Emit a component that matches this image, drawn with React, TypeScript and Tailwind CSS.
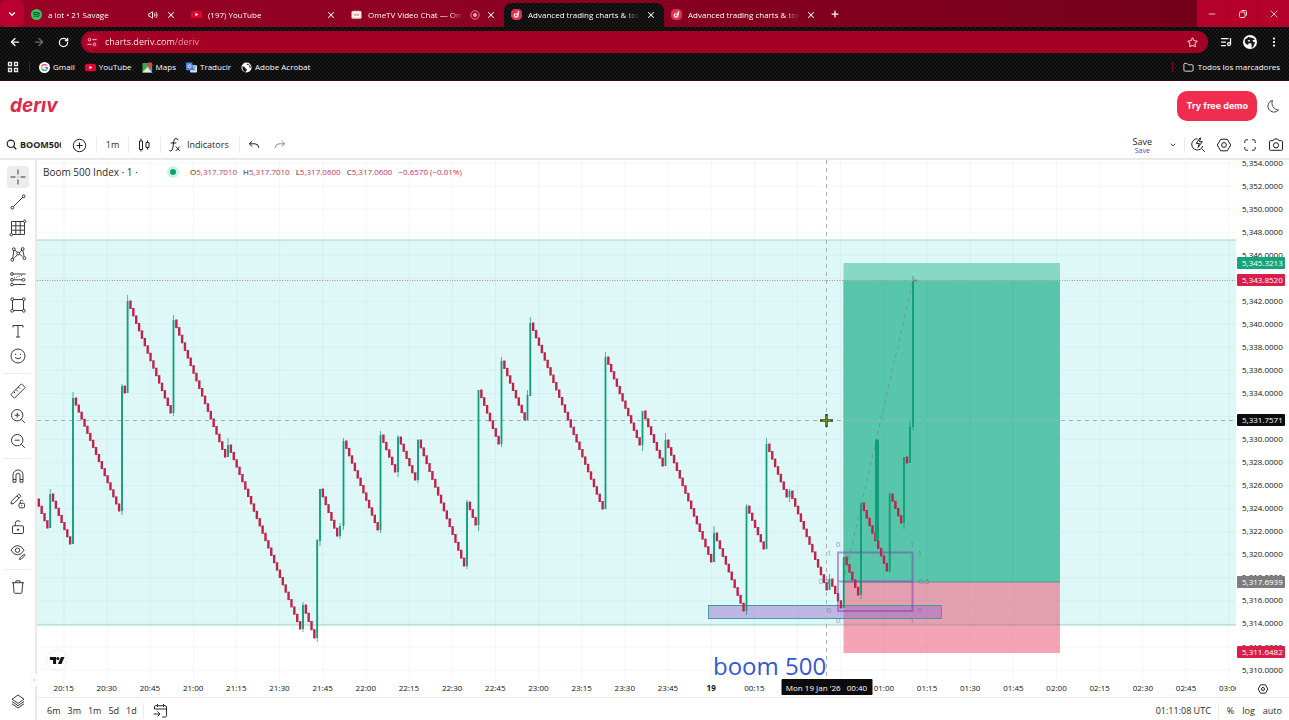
import React from "react";
import {
  ArrowLeft,
  ArrowRight,
  ChevronDown,
  EllipsisVertical,
  Folder,
  ListMusic,
  Minus,
  Plus,
  RotateCw,
  Star,
  Volume2,
  X,
} from "lucide-react";

/* ---------- shared icon frame ---------- */

function Glyph({ children, className = "size-5" }: { children: React.ReactNode; className?: string }) {
  return (
    <svg viewBox="0 0 20 20" fill="none" stroke="currentColor" strokeWidth="1" className={className} aria-hidden="true">
      {children}
    </svg>
  );
}

/* ---------- browser chrome ---------- */

function SpotifyMark() {
  return (
    <svg viewBox="0 0 12 12" className="size-[11px] shrink-0" aria-hidden="true">
      <circle cx="6" cy="6" r="6" fill="#35c565" />
      <g fill="none" stroke="#14361f" strokeLinecap="round">
        <path d="M2.6 4.3q3.6-1.1 6.9.7" strokeWidth="1.2" />
        <path d="M3 6.2q3.1-.9 5.9.6" strokeWidth="1" />
        <path d="M3.3 8q2.6-.7 4.9.5" strokeWidth=".8" />
      </g>
    </svg>
  );
}

function YouTubeMark() {
  return (
    <svg viewBox="0 0 12 12" className="size-[11px] shrink-0" aria-hidden="true">
      <rect x="0" y="1.8" width="12" height="8.4" rx="2.2" fill="#e3032f" />
      <path d="M4.8 4.2v3.6L8 6z" fill="#fff" />
    </svg>
  );
}

function OmeMark() {
  return (
    <svg viewBox="0 0 12 12" className="size-[11px] shrink-0" aria-hidden="true">
      <path d="M3.5.8l2 2M8.5.8l-2 2" stroke="#e9b9a8" strokeWidth=".8" />
      <rect x=".5" y="2.3" width="11" height="8.4" rx="1.4" fill="#f0d9c8" />
      <rect x="1.7" y="3.6" width="8.6" height="5.4" rx="1" fill="#fff" />
      <path d="M3 5l1.4 2.4L6 5l1.6 2.4L9 5" fill="none" stroke="#d8636f" strokeWidth=".9" />
    </svg>
  );
}

function DerivMark() {
  return (
    <svg viewBox="0 0 12 12" className="size-[11px] shrink-0" aria-hidden="true">
      <rect width="12" height="12" rx="4.5" fill="#e0324f" />
      <circle cx="5.3" cy="7" r="1.8" fill="none" stroke="#fff" strokeWidth="1.3" />
      <path d="M8.3 2.4L7.1 8.9" stroke="#fff" strokeWidth="1.4" />
    </svg>
  );
}

function GoogleMark() {
  return (
    <svg viewBox="0 0 12 12" className="size-[11px] shrink-0" aria-hidden="true">
      <circle cx="6" cy="6" r="6" fill="#fff" />
      <g fill="none" strokeWidth="1.5">
        <path d="M8.4 3.9A3.2 3.2 0 0 0 3.2 4.5" stroke="#ea4335" />
        <path d="M3.2 4.5a3.2 3.2 0 0 0 0 3" stroke="#fbbc05" />
        <path d="M3.2 7.5a3.2 3.2 0 0 0 4.9.9" stroke="#34a853" />
        <path d="M8.1 8.4A3 3 0 0 0 9.2 6.1H6.1" stroke="#4285f4" />
      </g>
    </svg>
  );
}

function MapsMark() {
  return (
    <svg viewBox="0 0 12 12" className="size-[11px] shrink-0" aria-hidden="true">
      <rect x=".5" y="1" width="10.5" height="10.5" rx="1" fill="#34a853" />
      <path d="M.5 11.5l6-6 5 6z" fill="#e6e9ec" />
      <path d="M6 6l5 5.5V5z" fill="#4a89f3" />
      <path d="M1 11l6-6" stroke="#fbd04b" strokeWidth="1.3" />
      <path d="M8.8.2a2.6 2.6 0 0 1 2.6 2.6c0 1.8-2.6 4.6-2.6 4.6S6.2 4.6 6.2 2.8A2.6 2.6 0 0 1 8.8.2z" fill="#e2453b" />
    </svg>
  );
}

function TranslateMark() {
  return (
    <svg viewBox="0 0 12 12" className="size-[11px] shrink-0" aria-hidden="true">
      <rect x="4.5" y="3.5" width="7.5" height="8" rx=".8" fill="#dfe3e8" />
      <path d="M0 .5h6.6L9 9H.8Q0 9 0 8.2z" fill="#4b86ee" />
      <circle cx="3.8" cy="4.6" r="1.6" fill="none" stroke="#fff" strokeWidth=".9" />
      <path d="M7.6 5.6h3.4M9.3 5.6q0 2.4-2 3.8M8.3 7l2.4 2.6" stroke="#5d7fb8" strokeWidth=".7" fill="none" />
    </svg>
  );
}

function GlobeMark() {
  return (
    <svg viewBox="0 0 12 12" className="size-[11px] shrink-0" aria-hidden="true">
      <circle cx="6" cy="6" r="5.5" fill="#fff" />
      <path d="M1.5 4.5q2.5 0 3 1.800t2 1.500q-.3 2-1.500 3Q1.500 10 1.500 4.500zM6 1.500q.2 2 2 1.800t1.200 1.800 1.500.6q-.2-3-4.700-4.200z" fill="#101010" />
    </svg>
  );
}

function Tab({
  icon,
  title,
  active,
  extra,
}: {
  icon: React.ReactNode;
  title: string;
  active?: boolean;
  extra?: React.ReactNode;
}) {
  const base = "flex h-6 w-40 shrink items-center gap-1.5 pb-px pr-2 pl-[7px] text-[8px] text-white";
  return (
    <div
      role="tab"
      aria-selected={!!active}
      className={
        active
          ? base + " rounded-t-lg bg-[#0b0b0b] bg-[repeating-conic-gradient(#171717_0_25%,#0c0c0c_0_50%)] bg-[length:4px_4px]"
          : base
      }
    >
      {icon}
      <span className="min-w-0 flex-1 overflow-hidden mask-r-from-85% mask-r-to-100% whitespace-nowrap">{title}</span>
      {extra}
      <button aria-label={`Close ${title}`} className="flex w-2.5 justify-center">
        <X className="size-2.5" strokeWidth={2.5} />
      </button>
    </div>
  );
}

function BrowserChrome() {
  return (
    <header className="font-['Open_Sans',sans-serif] text-[9px] leading-3 text-white">
      <div className="flex h-[27px] items-stretch bg-linear-to-r from-[#9a0224] via-[#870020] to-[#72001b]">
        <button aria-label="Search tabs" className="flex w-6 items-center justify-center rounded-md bg-[#b9002f]">
          <ChevronDown className="size-2.5" strokeWidth={3} />
        </button>
        <div role="tablist" className="flex min-w-0 items-end">
          <Tab icon={<SpotifyMark />} title="a lot • 21 Savage" extra={<Volume2 className="mr-0.5 size-2.5 shrink-0" strokeWidth={2.4} />} />
          <Tab icon={<YouTubeMark />} title="(197) YouTube" />
          <Tab
            icon={<OmeMark />}
            title="OmeTV Video Chat — OmeTV"
            extra={
              <svg viewBox="0 0 12 12" className="size-2.5 shrink-0" aria-hidden="true">
                <circle cx="6" cy="6" r="5" fill="none" stroke="#ff9db0" />
                <circle cx="6" cy="6" r="2.5" fill="#ff9db0" />
              </svg>
            }
          />
          <Tab icon={<DerivMark />} title="Advanced trading charts & tools" active />
          <Tab icon={<DerivMark />} title="Advanced trading charts & tools" />
        </div>
        <button aria-label="New tab" className="flex w-[22px] items-center justify-center">
          <Plus className="size-2.5" strokeWidth={3} />
        </button>
        <div className="ml-auto flex w-[92px] shrink-0 bg-[#b5002b] text-[#ffd5dc]">
          <button aria-label="Minimize" className="flex flex-1 items-center justify-center">
            <Minus className="size-2.5" strokeWidth={2} />
          </button>
          <button aria-label="Restore" className="flex flex-1 items-center justify-center border-x border-[#a30027]">
            <svg viewBox="0 0 10 10" className="size-2.5" fill="none" stroke="currentColor" aria-hidden="true">
              <rect x="1.5" y="3" width="5.5" height="5.5" rx="1" />
              <path d="M3.5 1.5h4q1 0 1 1v4" />
            </svg>
          </button>
          <button aria-label="Close window" className="flex flex-1 items-center justify-center">
            <X className="size-3" strokeWidth={1.8} />
          </button>
        </div>
      </div>

      <div className="h-[54px] border-b border-[#3c0714] bg-[#0b0b0b] bg-[repeating-conic-gradient(#171717_0_25%,#0a0a0a_0_50%)] bg-[length:4px_4px]">
        <div className="flex h-[30px] items-center px-[3px]">
          <button aria-label="Back" className="flex w-6 justify-center">
            <ArrowLeft className="size-3" strokeWidth={2.5} />
          </button>
          <button aria-label="Forward" className="flex w-6 justify-center text-[#6d6d6d]">
            <ArrowRight className="size-3" strokeWidth={2.5} />
          </button>
          <button aria-label="Reload" className="flex w-6 justify-center">
            <RotateCw className="size-[11px]" strokeWidth={2.8} />
          </button>
          <div className="mx-1.5 flex h-[22px] min-w-0 flex-1 items-center rounded-full bg-[#a30024] pr-2.5 pl-[3px]">
            <button aria-label="Site information" className="flex size-4 items-center justify-center rounded-full bg-[#b3042d]">
              <svg viewBox="0 0 12 12" className="size-2.5" fill="none" stroke="#ffc4cf" strokeWidth="1.2" aria-hidden="true">
                <circle cx="3" cy="3.2" r="1.5" />
                <path d="M6.5 3.2h5M.5 8.8h5" />
                <circle cx="9" cy="8.8" r="1.5" />
              </svg>
            </button>
            <input
              aria-label="Address"
              defaultValue="charts.deriv.com/deriv"
              className="ml-[5px] min-w-0 flex-1 bg-linear-to-r from-white from-[69px] to-[#f0a0ae] to-[70px] bg-clip-text text-[9px] text-transparent outline-none"
            />
            <button aria-label="Bookmark this page">
              <Star className="size-[11px] text-[#ffc0cb]" strokeWidth={2.2} />
            </button>
          </div>
          <button aria-label="Media controls" className="flex w-6 justify-center">
            <ListMusic className="size-3" strokeWidth={2.5} />
          </button>
          <button aria-label="Profile" className="flex w-6 justify-center">
            <svg viewBox="0 0 14 14" className="size-3.5" aria-hidden="true">
              <circle cx="7" cy="7" r="7" fill="#fff" />
              <path d="M1.8 4.500q2.500-1 3.700-2.700 1 1 2.500.7 3 .3 4 2.500L9.500 5l1 2 1.800.3-2.300 5-1.500.5V8.500L6 8.200 4.500 10 2 8z" fill="#1c1c1c" />
              <path d="M4.500 5l2.500.3-.8 1.900z" fill="#fff" />
            </svg>
          </button>
          <button aria-label="Menu" className="flex w-6 justify-center">
            <EllipsisVertical className="size-3" strokeWidth={2.5} />
          </button>
        </div>

        <nav aria-label="Bookmarks" className="flex h-5 items-center pr-[9px] pl-[7px] text-[8px]">
          <button aria-label="Apps">
            <svg viewBox="0 0 12 12" className="size-3" fill="none" stroke="#e8e8e8" strokeWidth="1.3" aria-hidden="true">
              <path d="M1.5 1.5h3v3h-3zM7.5 1.5h3v3h-3zM1.5 7.5h3v3h-3zM7.5 7.5h3v3h-3z" />
            </svg>
          </button>
          <span className="mr-[9px] ml-2.5 h-2.5 w-px bg-[#80041f]" />
          <div className="flex gap-2.5">
            <a href="#gmail" className="flex items-center gap-[3px]"><GoogleMark />Gmail</a>
            <a href="#youtube" className="flex items-center gap-[3px]"><YouTubeMark />YouTube</a>
            <a href="#maps" className="flex items-center gap-[3px]"><MapsMark />Maps</a>
            <a href="#translate" className="flex items-center gap-[3px]"><TranslateMark />Traducir</a>
            <a href="#acrobat" className="flex items-center gap-[3px]"><GlobeMark />Adobe Acrobat</a>
          </div>
          <span className="mr-2.5 ml-auto h-2.5 w-px bg-[#80041f]" />
          <button className="flex items-center gap-1">
            <Folder className="size-[11px]" strokeWidth={1.8} />
            Todos los marcadores
          </button>
        </nav>
      </div>
    </header>
  );
}

/* ---------- top bar ---------- */

function Divider() {
  return <span className="h-4 w-px shrink-0 bg-[#ebebeb]" />;
}

function TopToolbar() {
  return (
    <div className="flex h-[27px] shrink-0 items-center text-[9px] text-[#1f1f1f]">
      <button className="flex w-[61px] items-center gap-[3px] overflow-hidden pl-1.5 font-bold whitespace-nowrap">
        <svg viewBox="0 0 12 12" className="size-[11px] shrink-0" fill="none" stroke="currentColor" strokeWidth="1.3" aria-hidden="true">
          <circle cx="5.3" cy="5.3" r="4" />
          <path d="M8.2 8.2l3 3" />
        </svg>
        BOOM500
      </button>
      <button aria-label="Compare symbols" className="flex w-[35px] justify-center">
        <Glyph>
          <circle cx="10.500" cy="10.500" r="6.200" />
          <path d="M10.500 7.500v6M7.500 10.500h6" />
        </Glyph>
      </button>
      <Divider />
      <button className="w-[31px]">1m</button>
      <Divider />
      <button aria-label="Candles" className="flex w-[31px] justify-center">
        <Glyph>
          <path d="M4.500 6h3v8.500h-3zM6 3.500V6M6 14.500v2M11 7.500h3v5h-3zM12.500 5.500v2M12.500 12.500v2" />
        </Glyph>
      </button>
      <Divider />
      <button className="flex w-[78px] items-center gap-0.5 pl-1">
        <Glyph>
          <path d="M13 5.300q-.3-1.800-2-1.800-1.800 0-2.100 2.200L7.700 13.500q-.4 2.500-2.200 2.500-.8 0-1.200-.6M5.800 8h5.500M10.800 11.500l4 4.500M14.800 11.500l-4 4.500" />
        </Glyph>
        Indicators
      </button>
      <Divider />
      <button aria-label="Undo" className="flex w-7 justify-center">
        <Glyph>
          <path d="M8.300 6L5.300 8.800l3 2.800M5.500 8.800h5.500q3.500 0 3.800 4" />
        </Glyph>
      </button>
      <button aria-label="Redo" className="flex w-6 justify-center text-[#8a8a8a]">
        <Glyph>
          <path d="M11.700 6l3 2.800-3 2.800M14.500 8.800H9q-3.500 0-3.800 4" />
        </Glyph>
      </button>

      <div className="ml-auto flex items-center">
        <button className="flex flex-col items-center pt-px leading-[10px]">
          Save
          <span className="text-[7px] leading-[7px] text-[#3748c8]">Save</span>
        </button>
        <button aria-label="Manage layouts" className="mr-1.5 ml-4 flex w-2.5 justify-center">
          <ChevronDown className="size-2" strokeWidth={2.400} />
        </button>
        <Divider />
        <button aria-label="Quick search" className="flex w-[26px] justify-center">
          <Glyph>
            <path d="M9.500 3.800a5.600 5.600 0 1 0 5.200 7.200M13.500 13.500l3.300 3.300M11.800 3L8.300 8.500h3L10 12.500l4.300-5.800h-3L12.800 3z" />
          </Glyph>
        </button>
        <button aria-label="Settings" className="flex w-[26px] justify-center">
          <Glyph>
            <path d="M6.700 4.200h6.600L16.700 10l-3.400 5.800H6.700L3.300 10z" strokeLinejoin="round" />
            <circle cx="10" cy="10" r="2.400" />
          </Glyph>
        </button>
        <button aria-label="Fullscreen" className="flex w-[26px] justify-center">
          <Glyph>
            <path d="M4.800 8V6.300q0-1.500 1.500-1.500H8M12 4.800h1.700q1.500 0 1.500 1.500V8M15.200 12v1.700q0 1.500-1.500 1.500H12M8 15.200H6.300q-1.500 0-1.500-1.500V12" />
          </Glyph>
        </button>
        <button aria-label="Snapshot" className="flex w-[26px] justify-center">
          <Glyph>
            <path d="M3.500 6.700q0-1 1-1h2.600l1.200-1.700h3.400l1.200 1.700h2.600q1 0 1 1v7.600q0 1-1 1h-11q-1 0-1-1z" />
            <circle cx="10" cy="10.300" r="2.600" />
          </Glyph>
        </button>
      </div>
    </div>
  );
}

/* ---------- drawing toolbar ---------- */

const dot = (x: number, y: number, r = 1.4) => <circle key={`${x}-${y}`} cx={x} cy={y} r={r} fill="#fff" />;

const toolGroups: { name: string; shape: React.ReactNode }[][] = [
  [
    { name: "Cross", shape: <path d="M10 2.500v5M10 12.500v5M2.500 10h5M12.500 10h5M9.700 10h.6" /> },
    { name: "Trend line", shape: <><path d="M5 15L15 5" />{dot(4.3, 15.7)}{dot(15.7, 4.3)}</> },
    { name: "Gann and Fibonacci", shape: <><path d="M3.500 3.500h13v13h-13zM3.500 7.800h13M3.500 12.200h13M7.800 3.500v13M12.200 3.500v13" />{dot(16.7, 3.3, 1.2)}{dot(3.3, 16.7, 1.2)}</> },
    { name: "Patterns", shape: <><path d="M4.500 15.500L6 5.500l8.500 7M4.800 15.500L14.500 5.500l2 8.500" />{dot(4.3, 15.8)}{dot(5.8, 5.2)}{dot(10.2, 9.5)}{dot(14.7, 5)}{dot(16.5, 14.2)}</> },
    { name: "Forecasting", shape: <><path d="M5 5h12.500M5 10.800h10.500M5 15.500h12.500" /><path d="M6 9l9-3" strokeDasharray="1 1.5" />{dot(4, 5)}{dot(4, 10.8)}{dot(15.5, 10.8)}{dot(4, 15.5)}</> },
    { name: "Shapes", shape: <><path d="M4.500 4.500h11v11h-11z" />{dot(4.2, 4.2)}{dot(15.8, 4.2)}{dot(4.2, 15.8)}{dot(15.8, 15.8)}</> },
    { name: "Text", shape: <path d="M5 6.500V4.500h10v2M10 4.500v11.500M8 16h4" /> },
    { name: "Icons", shape: <><circle cx="10" cy="10" r="7" /><path d="M7 11.500q3 2.800 6 0M7.500 7.700v1.300M12.500 7.700v1.300" /></> },
  ],
  [
    { name: "Measure", shape: <path d="M2.800 13.500L13.500 2.800l3.700 3.700L6.500 17.200zM5.700 10.700l1.500 1.500M8 8.400l2 2M10.300 6l1.500 1.500" /> },
    { name: "Zoom in", shape: <><circle cx="9.2" cy="9.2" r="5.7" /><path d="M13.300 13.300l3.500 3.500M9.200 6.700v5M6.700 9.200h5" /></> },
    { name: "Zoom out", shape: <><circle cx="9.2" cy="9.2" r="5.7" /><path d="M13.300 13.300l3.500 3.500M6.700 9.200h5" /></> },
  ],
  [
    { name: "Magnet mode", shape: <path d="M5 16.200V9a5 5 0 0 1 10 0v7.200h-3V9.200a2 2 0 0 0-4 0v7zM5 13.500h3M12 13.500h3" /> },
    { name: "Keep drawing", shape: <><path d="M3 13l.4-2.800 7.200-7q1.600.4 2.200 2.200l-7 7z M9 5l2 2" /><rect x="11" y="12.3" width="5.5" height="4.5" rx="1" fill="#fff" /><path d="M12.300 12.300v-1.600q0-1.500 1.500-1.500 1 0 1.500.8M13.700 14.200v1" /></> },
    { name: "Lock drawings", shape: <><rect x="4.5" y="8.8" width="11" height="7.7" rx="1.2" /><path d="M7.300 8.800V6.300q0-2.600 2.700-2.600 1.900 0 2.500 1.500" /><circle cx="10" cy="12.7" r=".7" fill="currentColor" /></> },
    { name: "Hide drawings", shape: <><path d="M3 8.200q2.600-4.700 6.500-4.700T16 8.200q-2.600 4.700-6.500 4.700T3 8.200z" /><circle cx="9.5" cy="8.2" r="2.2" /><path d="M11.500 17.500l.8-2.300 4-3 .8 1-3.500 3.600z" /></> },
  ],
  [{ name: "Remove", shape: <path d="M4 5.700h12M7.500 5.500l.6-1.700h3.800l.6 1.700M5.200 5.700l.9 9.600q.1 1 1.100 1h5.600q1 0 1.100-1l.9-9.600" /> }],
];

const groupHeights = ["h-[205px]", "h-[76px]", "h-[102px]", "h-[26px]"];

function DrawingToolbar() {
  return (
    <aside className="flex w-[35px] shrink-0 flex-col pt-1 pb-1.5 text-[#3a3a3a]">
      {toolGroups.map((group, g) => (
        <React.Fragment key={g}>
          {g > 0 && <span className="my-1 ml-1 h-px w-[27px] shrink-0 bg-[#ececec]" />}
          <div className={"flex shrink-0 flex-col " + groupHeights[g]}>
            {group.map((tool, i) => (
              <button key={tool.name} aria-label={tool.name} className="flex min-h-0 flex-1 items-center justify-center">
                <span className={g === 0 && i === 0 ? "rounded-sm bg-[#ececec] p-px" : "p-px"}>
                  <Glyph>{tool.shape}</Glyph>
                </span>
              </button>
            ))}
          </div>
        </React.Fragment>
      ))}
      <button aria-label="Object tree" className="mt-auto flex h-[26px] shrink-0 items-center justify-center">
        <Glyph>
          <path d="M10 4l6 4.200-6 4.200-6-4.200zM4 10.500l6 4.200 6-4.200M4 12.800l6 4.200 6-4.200" strokeLinejoin="round" />
        </Glyph>
      </button>
    </aside>
  );
}

/* ---------- chart ---------- */

const VIEW = { x: 37, y: 160, w: 1199, h: 521 };
const left = (x: number) => `${((x - VIEW.x) / VIEW.w) * 100}%`;
const top = (y: number) => `${((y - VIEW.y) / VIEW.h) * 100}%`;

const STEP = 2.877;
const GREEN = "#109d78";
const RED = "#c0224a";

/* Each spike: x, body top, body bottom, wick top, wick bottom. Between spikes the price steps down. */
const spikes: [number, number, number, number, number][] = [
  [50.2, 494, 528, 489, 528],
  [73, 398, 544, 392, 544],
  [122, 386, 511, 384, 515],
  [127.6, 301, 393, 295, 393],
  [173.5, 320, 413, 315, 416],
  [228, 445, 457, 438, 457],
  [303, 605, 629, 602, 632],
  [317.2, 540, 638, 539, 642],
  [320, 489, 541, 489, 546],
  [340, 526, 536, 523, 539],
  [343.5, 441, 526, 438, 530],
  [380.5, 435, 530, 431, 533],
  [398, 437, 472, 435, 477],
  [418, 440, 480, 439, 483],
  [467, 502, 566, 500, 569],
  [478.5, 390, 525, 390, 531],
  [501.5, 361, 444, 357, 447],
  [527.5, 395, 420, 390, 420],
  [530.3, 323, 396, 317, 396],
  [605.5, 357, 509, 352, 509],
  [642.5, 411, 445, 411, 451],
  [665.5, 440, 466, 433, 466],
  [714, 533, 562, 526, 562],
  [746.5, 506, 611, 504, 615],
  [766.5, 444, 549, 438, 549],
  [789.5, 491, 497, 489, 502],
  [829.5, 579, 590, 574, 590],
  [843.7, 557, 608, 557, 608],
  [861, 503, 595, 503, 599],
  [889.7, 494, 571, 492, 573],
  [904, 457, 523, 457, 529],
  [910, 427, 463, 420, 463],
  [913, 281, 427, 276, 430],
];

type Bar = { x: number; y: number; h: number };

function fallingBars(): Bar[] {
  const bars: Bar[] = [];
  const run = (x0: number, x1: number, y0: number, y1: number) => {
    const n = Math.round((x1 - x0) / STEP) - 1;
    for (let i = 0; i < n; i++) {
      const h = (y1 - y0) / n;
      bars.push({ x: x0 + ((x1 - x0) * (i + 1)) / (n + 1), y: y0 + i * h, h });
    }
  };
  run(36, 50.2, 499, 528);
  for (let i = 0; i < spikes.length - 1; i++) {
    run(spikes[i][0], spikes[i + 1][0], spikes[i][1], spikes[i + 1][2]);
  }
  return bars;
}

const columns = Array.from({ length: 28 }, (_, i) => 64 + i * 43.15);
const rows = Array.from({ length: 23 }, (_, i) => 163 + i * 23.05);

const fibLabels: { x: number; y: number; text: string }[] = [
  { x: 838, y: 544, text: "0" },
  { x: 829, y: 553, text: "1" },
  { x: 824, y: 581, text: "0.5" },
  { x: 829, y: 610, text: "0" },
  { x: 838, y: 620, text: "0" },
  { x: 912, y: 544, text: "1" },
  { x: 920, y: 553, text: "1" },
  { x: 924, y: 581, text: "0.5" },
  { x: 920, y: 610, text: "0" },
  { x: 912, y: 620, text: "1" },
];

function Plot() {
  const bars = fallingBars();
  return (
    <svg
      viewBox={`${VIEW.x} ${VIEW.y} ${VIEW.w} ${VIEW.h}`}
      preserveAspectRatio="none"
      className="absolute inset-0 h-full w-full"
      role="img"
      aria-label="Boom 500 Index, 1 minute candles"
    >
      <rect x="37" y="240" width="1199" height="385" fill="#def8f8" />
      <path d="M37 240H1236M37 625H1236" stroke="#9ad8d0" />
      <g stroke="rgba(0,60,60,0.045)">
        {columns.map((x) => <path key={x} d={`M${x} 160V681`} />)}
        {rows.map((y) => <path key={y} d={`M37 ${y}H1236`} />)}
      </g>

      <rect x="843.5" y="263" width="216.5" height="319" fill="#87d9c6" />
      <rect x="843.5" y="280.5" width="216.5" height="301.5" fill="#58c6ab" />
      <rect x="843.5" y="582" width="216.5" height="71" fill="rgba(233,53,91,0.45)" />
      <path d="M843.5 582H1060" stroke="#6f8f84" />
      <path d="M883.5 281V582M927 281V582M970 281V582M1013 281V582" stroke="rgba(0,60,60,0.03)" />

      <rect x="708.5" y="605.5" width="233" height="13" fill="rgba(150,100,205,0.44)" stroke="#3f9f98" />
      <path d="M845 575L913 281" stroke="#6b8f88" strokeWidth=".8" strokeDasharray="4 4" />

      <path d="M37 420.5H1236M826.5 160V681" stroke="#a5b2b4" strokeDasharray="4 4" />

      {bars.map((b, i) => (
        <rect key={i} x={b.x - 1.2} y={b.y - 0.5} width="2.4" height={b.h + 1} fill={RED} />
      ))}
      {spikes.map(([x, t, b, wt, wb], i) => (
        <g key={i} fill={GREEN}>
          <rect x={x - 0.5} y={wt} width="1" height={wb - wt} opacity=".7" />
          <rect x={x - 0.9} y={t} width="1.8" height={b - t} />
        </g>
      ))}
      <rect x="875" y="439.5" width="4" height="101" fill={GREEN} />
      <path d="M914 280.500h2.500" stroke={RED} strokeWidth="1.5" />

      <path d="M838 552.500H912.500V611H838zM838 581.500H912.500" fill="none" stroke="rgba(125,60,180,0.5)" strokeWidth="2" />
      <path d="M37 280.500H1236" stroke="#b98a9a" strokeDasharray="1 1.5" />

      <path d="M826.500 414v13M820 420.500h13" stroke="#39451a" strokeWidth="2.5" />
      <path d="M826.500 416v9M822 420.500h9" stroke="#7f9c26" strokeWidth=".8" />
    </svg>
  );
}

const ohlc = [
  ["O", "5,317.7010"],
  ["H", "5,317.7010"],
  ["L", "5,317.0600"],
  ["C", "5,317.0600"],
];

function ChartPane() {
  return (
    <div className="relative min-w-0 flex-1 overflow-hidden">
      <Plot />
      {fibLabels.map((f, i) => (
        <span
          key={i}
          className="absolute -translate-x-1/2 -translate-y-1/2 text-[8px] leading-none text-[#7d6a98]/70"
          style={{ left: left(f.x), top: top(f.y) }}
        >
          {f.text}
        </span>
      ))}
      <span
        className="absolute -translate-y-1/2 text-[24px] leading-none whitespace-nowrap text-[#3358d4]"
        style={{ left: left(713), top: top(666) }}
      >
        boom 500
      </span>
      <div className="absolute top-1 left-1.5 flex h-4 items-center text-[8px] whitespace-nowrap text-[#2a2a2a]">
        <span className="w-[124px] text-[10px]">Boom 500 Index · 1 ·</span>
        <span className="mr-[11px] flex size-3 items-center justify-center rounded-full bg-[#c9f3e4]">
          <span className="size-1.5 rounded-full bg-[#0f9f74]" />
        </span>
        <div className="flex gap-1.5">
          {ohlc.map(([k, v]) => (
            <span key={k}>
              {k}
              <span className="text-[#cc2f55]">{v}</span>
            </span>
          ))}
          <span className="text-[#cc2f55]">−0.6570 (−0.01%)</span>
        </div>
      </div>
      <div className="absolute bottom-[11px] left-2.5 flex size-5 items-center justify-center rounded-full bg-white shadow-[0_0_2px_rgba(0,0,0,0.15)]">
        <svg viewBox="0 0 18 10" className="w-4" aria-label="TradingView">
          <path d="M1 1h7v8H4.600V4.400H1z" fill="#111" />
          <circle cx="10" cy="2.7" r="1.7" fill="#111" />
          <path d="M13.500 1h4L14 9h-4z" fill="#111" />
        </svg>
      </div>
    </div>
  );
}

const prices = Array.from({ length: 23 }, (_, i) => `5,${354 - i * 2}.0000`);

const priceTags = [
  { y: 263, text: "5,345.3213", tone: "bg-[#13a67c]" },
  { y: 280, text: "5,343.8520", tone: "bg-[#d81e4a]" },
  { y: 420, text: "5,331.7571", tone: "bg-[#0c0c0c]" },
  { y: 582, text: "5,317.6939", tone: "bg-[#7d7d7d]" },
  { y: 652, text: "5,311.6482", tone: "bg-[#d81e4a]" },
];

function PriceAxis() {
  return (
    <div className="relative w-[53px] shrink-0 overflow-hidden text-[8px] leading-none text-[#111]">
      <div className="absolute inset-x-0 -top-[9px] bottom-0 flex flex-col pl-1.5">
        {prices.map((p) => (
          <span key={p} className="flex min-h-0 flex-1 items-center">{p}</span>
        ))}
      </div>
      {priceTags.map((t) => (
        <span
          key={t.text}
          className={"absolute left-px flex h-3 w-12 -translate-y-1/2 items-center rounded-[1px] pl-[5px] font-medium text-white " + t.tone}
          style={{ top: top(t.y) }}
        >
          {t.text}
        </span>
      ))}
    </div>
  );
}

const times = Array.from({ length: 28 }, (_, i) => {
  const m = 20 * 60 + 15 + i * 15;
  if (m === 1440) return "19";
  const h = Math.floor(m / 60) % 24;
  return `${String(h).padStart(2, "0")}:${String(m % 60).padStart(2, "0")}`;
});

function TimeAxis() {
  return (
    <div className="flex h-4 shrink-0 text-[8px] leading-none text-[#111]">
      <div className="relative min-w-0 flex-1">
        <div className="h-full overflow-hidden pb-0.5">
          <div className="-mr-[15px] ml-[5px] flex h-full items-center">
            {times.map((t) => (
              <span key={t} className={t === "19" ? "min-w-0 flex-1 text-center font-bold" : "min-w-0 flex-1 text-center"}>
                {t}
              </span>
            ))}
          </div>
        </div>
        <span
          className="absolute -top-0.5 flex h-4 w-[91px] -translate-x-1/2 items-center justify-center rounded-[1px] bg-[#0c0c0c] pt-0.5 font-medium whitespace-pre text-white"
          style={{ left: left(826.5) }}
        >
          {"Mon 19 Jan '26   00:40"}
        </span>
      </div>
      <button aria-label="Scale settings" className="flex w-[53px] items-center justify-center">
        <Glyph className="size-3.5">
          <path d="M6.500 4h7L17 10l-3.500 6h-7L3 10z" strokeWidth="1.3" />
          <circle cx="10" cy="10" r="2.2" strokeWidth="1.3" />
        </Glyph>
      </button>
    </div>
  );
}

function RangeBar() {
  return (
    <footer className="flex h-[23px] shrink-0 items-center border-t border-[#ececec] pt-1 text-[9px] text-[#2a2a2a]">
      <div className="flex gap-[7px] pl-2.5">
        {["6m", "3m", "1m", "5d", "1d"].map((r) => (
          <button key={r}>{r}</button>
        ))}
      </div>
      <span className="mx-1.5 h-4 w-px bg-[#ebebeb]" />
      <button aria-label="Go to date">
        <Glyph>
          <path d="M4.500 8V6q0-1.300 1.300-1.300h9.400Q16.500 4.700 16.500 6v8.700q0 1.300-1.300 1.300h-3M4.500 8h12M7.500 3v3M13.500 3v3M3.500 13h6.500M7.500 10.500L10 13l-2.500 2.500" />
        </Glyph>
      </button>
      <button className="ml-auto">01:11:08 UTC</button>
      <span className="mr-2 ml-[7px] h-4 w-px bg-[#ebebeb]" />
      <div className="flex gap-2 pr-[7px]">
        <button>%</button>
        <button>log</button>
        <button>auto</button>
      </div>
    </footer>
  );
}

export default function App() {
  return (
    <div className="flex h-screen min-h-[700px] flex-col overflow-hidden bg-white font-['Open_Sans',sans-serif]">
      <BrowserChrome />
      <div className="flex h-[50px] shrink-0 items-center pr-1.5 pl-2.5">
        <a href="#home" aria-label="deriv" className="pb-px font-['Inter',sans-serif] text-[19px] leading-none font-bold text-[#e0284c] italic">
          derıv
        </a>
        <button className="ml-auto h-[30px] rounded-[10px] bg-[#f02c4f] px-[9px] font-['Inter',sans-serif] text-[9px] font-bold text-white">
          Try free demo
        </button>
        <button aria-label="Dark mode" className="ml-1.5 text-[#444]">
          <Glyph>
            <path d="M9.500 4.300A6 6 0 1 0 15.500 14 7 7 0 0 1 9.500 4.300z" strokeLinejoin="round" />
          </Glyph>
        </button>
      </div>
      <TopToolbar />
      <div className="h-0.5 shrink-0 bg-[#e9e9e9]" />
      <div className="flex min-h-0 flex-1">
        <DrawingToolbar />
        <div className="relative w-0.5 shrink-0 bg-[#e9e9e9]">
          <button
            aria-label="Hide drawings toolbar"
            className="absolute bottom-8 -left-1 flex h-4 w-1.5 items-center justify-center rounded-sm bg-white text-[7px] text-[#9a9a9a] shadow-[0_0_1px_rgba(0,0,0,0.3)]"
          >
            ‹
          </button>
        </div>
        <main className="flex min-w-0 flex-1 flex-col">
          <div className="flex min-h-0 flex-1">
            <ChartPane />
            <PriceAxis />
          </div>
          <TimeAxis />
          <RangeBar />
        </main>
      </div>
    </div>
  );
}
